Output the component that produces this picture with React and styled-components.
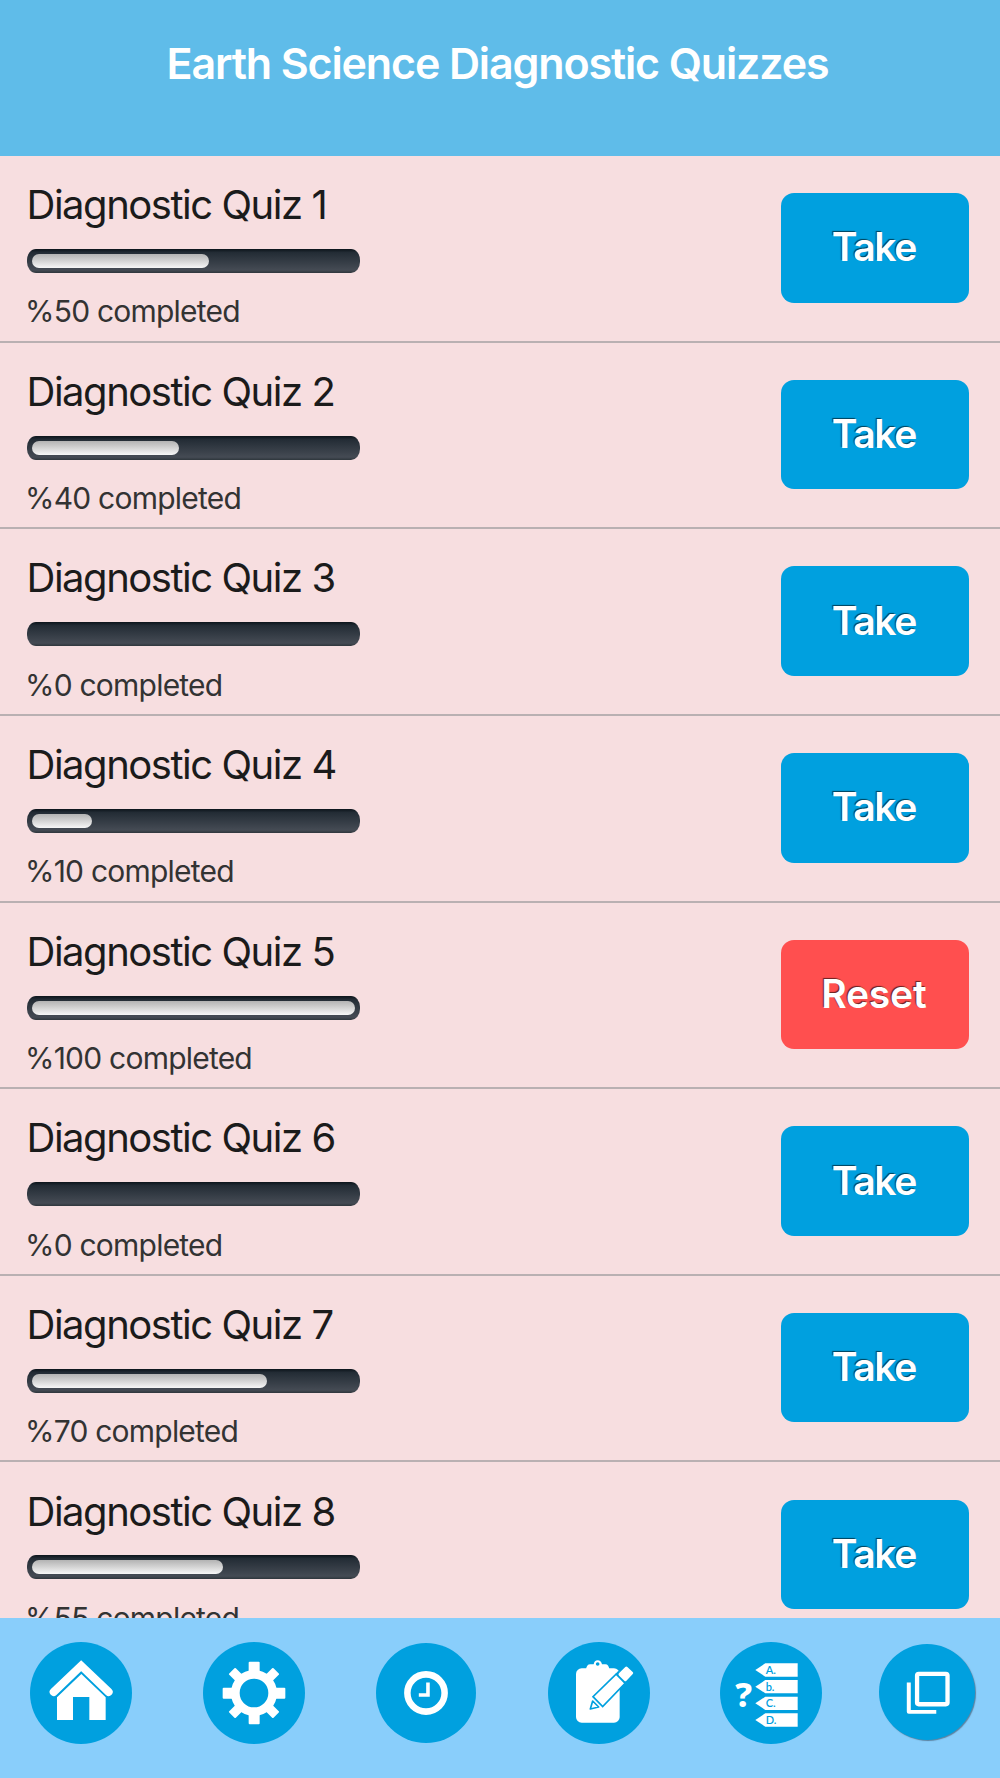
import React from 'react'
import styled, { createGlobalStyle } from 'styled-components'

const quizzes = [
  { id: 1, progress: 50 },
  { id: 2, progress: 40 },
  { id: 3, progress: 0 },
  { id: 4, progress: 10 },
  { id: 5, progress: 100 },
  { id: 6, progress: 0 },
  { id: 7, progress: 70 },
  { id: 8, progress: 55 },
];

const blue = '#00a0df';

function HomeIcon() {
  return <svg viewBox="0 0 306 306">
      <path d="M71 150 L153.500 71 L236 150" fill="none" stroke="#fff" strokeWidth="24" strokeLinecap="round" />
      <path d="M154 96 L227 166 V234 H178 V165 H129 V234 H81 V166 Z" fill="#fff" />
  </svg>
}

function GearIcon() {
  return <svg viewBox="0 0 306 306">
      {[0, 45, 90, 135].map((angle) => (
        <rect key={angle} x={angle % 90 ? 139 : 137} y="59" width={angle % 90 ? 28 : 33} height="188" rx="3" fill="#fff" transform={`rotate(${angle} 153 153)`} />
      ))}
      <circle cx="153" cy="153" r="56" fill={blue} stroke="#fff" strokeWidth="26" />
  </svg>
}

function ClockIcon() {
  return <svg viewBox="0 0 306 306">
      <circle cx="153" cy="153" r="57" fill="none" stroke="#fff" strokeWidth="20" />
      <path d="M159 121 V159 H131" fill="none" stroke="#fff" strokeWidth="11" />
  </svg>
}

function ClipboardIcon() {
  return <svg viewBox="0 0 306 306">
      <rect x="84" y="79" width="131" height="163" rx="17" fill="#fff" />
      <path d="M114 84 Q115 67 127 67 H137 Q139 55 149 55 Q159 55 162 67 H172 Q183 67 184 84 Z" fill="#fff" />
      <circle cx="149" cy="66" r="5.500" fill={blue} />
      <path d="M205 96 L232 123 L164 194 L135 164 Z" fill="#fff" stroke={blue} strokeWidth="5" />
      <path d="M134 177 L152 195 L127 201 Z" fill="#fff" stroke={blue} strokeWidth="5" strokeLinejoin="round" />
      <path d="M211 86 L242 117 L231 127 L202 97 Z" fill={blue} />
      <path d="M235 78 L251 93 L232 113 L216 97 Z" fill="#fff" stroke="#fff" strokeWidth="9" strokeLinejoin="round" />
  </svg>
}

function AnswersIcon() {
  return <svg viewBox="0 0 306 306">
      <text x="46" y="195" fill="#fff" fontFamily="Noto Sans, sans-serif" fontSize="103" fontWeight="800">?</text>
      {['A.', 'b.', 'C.', 'D.'].map((label, i) => (
        <g key={label} transform={`translate(0 ${i * 50})`}>
          <path d="M106 84 L136 64 H233 V104 H136 Z" fill="#fff" />
          <text x="137" y="96" fill={blue} fontFamily="Lato, sans-serif" fontSize="33" fontWeight="600">{label}</text>
        </g>
      ))}
  </svg>
}

function CopyIcon() {
  return <svg viewBox="0 0 290 290">
      <rect x="115" y="90" width="92" height="92" rx="5" fill="none" stroke="#fff" strokeWidth="13" />
      <path d="M90 116 V205 H173" fill="none" stroke="#fff" strokeWidth="12" strokeLinejoin="round" />
  </svg>
}

export default function App() {
  return <Screen>
      <GlobalStyle />
      <Header>
        <h1>Earth Science Diagnostic Quizzes</h1>
      </Header>
      <List>
        {quizzes.map(({ id, progress }) => (
          <Row key={id}>
            <div>
              <Name>Diagnostic Quiz {id}</Name>
              <Track>
                {progress > 0 && <Fill style={{ width: 31 + progress * 2.92 }} />}
              </Track>
              <Status>%{progress} completed</Status>
            </div>
            <Action $reset={progress === 100}>{progress === 100 ? 'Reset' : 'Take'}</Action>
          </Row>
        ))}
      </List>
      <Footer>
        <NavButton aria-label="Home"><HomeIcon /></NavButton>
        <NavButton aria-label="Settings"><GearIcon /></NavButton>
        <NavButton aria-label="History" $inset={1.5}><ClockIcon /></NavButton>
        <NavButton aria-label="Notes"><ClipboardIcon /></NavButton>
        <NavButton aria-label="Answers"><AnswersIcon /></NavButton>
        <LastButton aria-label="Windows"><CopyIcon /></LastButton>
      </Footer>
  </Screen>
}

const GlobalStyle = createGlobalStyle`
body{
  margin: 0;
  font-family: Inter, "Liberation Sans", sans-serif;
}
*{
  box-sizing: border-box;
}
`;

const Screen = styled.div`
width: 1000px;
height: 1778px;
overflow: hidden;
display: grid;
grid-template-rows: 156px 1fr 160px;
background: #f7dee0;
`;

const Header = styled.header`
background: #5fbce9;
padding: 37px 5px 0 0;
text-align: center;
h1{
  margin: 0;
  color: #fff;
  font-size: 43px;
  line-height: 52px;
  font-weight: 600;
  letter-spacing: -1.14px;
  white-space: nowrap;
}
`;

const List = styled.main`
min-height: 0;
overflow: hidden;
`;

const Row = styled.section`
height: 186.65px;
padding: 27.2px 30.6px 0 26.5px;
display: flex;
justify-content: space-between;
align-items: flex-start;
border-bottom: 2px solid #b9b0b2;
`;

const Name = styled.h2`
margin: 0;
color: #1b1b1b;
font-size: 40px;
line-height: 44px;
font-weight: 400;
letter-spacing: -1.47px;
white-space: nowrap;
`;

const Track = styled.div`
width: 333.5px;
height: 24px;
margin-top: 21.8px;
padding: 5px;
border-radius: 9px / 11px;
background: linear-gradient(#0c141b, #232c35 15%, #454b54 88%, #2e363c);
`;

const Fill = styled.div`
height: 14px;
border-radius: 7px;
background: linear-gradient(#b3b3b3, #d4d4d4 50%, #f7f7f7);
`;

const Status = styled.p`
margin: 20.4px 0 0 -1.5px;
color: #333;
font-size: 30px;
line-height: 36px;
letter-spacing: -0.78px;
white-space: nowrap;
`;

const Action = styled.button`
width: 188px;
height: 109.5px;
margin-top: 9.9px;
padding: 0 3px 0 0;
border: 0;
border-radius: 13px;
background: ${({ $reset }) => ($reset ? '#ff4f4f' : blue)};
color: #fff;
font: 600 39px/107px Inter, sans-serif;
letter-spacing: ${({ $reset }) => ($reset ? -0.2 : -1.4)}px;
text-shadow: -1px -1.5px 1px rgba(0, 0, 0, 0.6);
/* keeps the label on the upper half pixel of the button */
padding-bottom: 2px;
`;

const Footer = styled.footer`
background: #89cefb;
padding: 24px 0 0 30.300px;
display: flex;
align-items: flex-start;
gap: 70.5px;
`;

const NavButton = styled.button`
flex: none;
width: 102px;
height: 102px;
padding: 0;
border: ${({ $inset = 0 }) => $inset}px solid transparent;
border-radius: 50%;
background: ${blue};
background-clip: padding-box;
svg{
  display: block;
  width: 100%;
  height: 100%;
}
`;

const LastButton = styled(NavButton)`
width: 96px;
height: 96px;
margin: 1.5px 0 0 -14px;
box-shadow: 1px 1px 1px rgba(60, 80, 100, 0.6);
`;
